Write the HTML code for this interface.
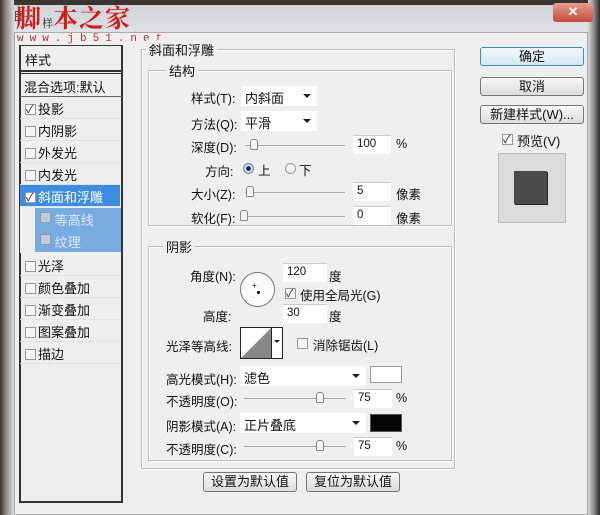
<!DOCTYPE html>
<html><head><meta charset="utf-8"><style>
*{margin:0;padding:0;box-sizing:border-box}
body{width:600px;height:515px;overflow:hidden;background:#ececec;font-family:"Liberation Sans","Noto Sans CJK SC",sans-serif;font-size:12.5px;color:#111;position:relative}
.a{position:absolute;white-space:nowrap}
.box{position:absolute;border:1px solid #bcbcbc;box-shadow:inset 1px 1px 0 #fff,1px 1px 0 #fff}
.lbl{position:absolute;background:#efefef;padding:0 3px;font-size:13px}
.in{position:absolute;background:#fff;border-top:1px solid #ccc;height:19px;padding:2px 0 0 4px;font-size:11.5px}
.dd{position:absolute;background:#fff;height:20px;padding:2px 0 0 4px;font-size:13px}
.dd:after{content:"";position:absolute;right:6px;top:8px;border:4px solid transparent;border-top:4px solid #222}
.sl{position:absolute;height:1px;background:#aaa}
.th{position:absolute;width:8px;height:11px;border:1px solid #888;border-radius:3px 3px 1px 1px;background:#f4f4f4}
.cb{position:absolute;width:11px;height:11px;border:1px solid #999;background:#f6f6f6}
.ck:after{content:"✓";position:absolute;left:0;top:-4px;font-size:11px;color:#233}
.btn{position:absolute;border:1px solid #777;border-radius:3px;background:linear-gradient(#f8f8f8,#dcdcdc);text-align:center;font-size:13px;line-height:17px}
.row{position:absolute;left:20px;width:100px;height:22px;border-bottom:1px solid #e2e2e2;font-size:13px;padding:2px 0 0 5px}
.row .cb{position:relative;display:inline-block;vertical-align:-1px;margin-right:2px}
</style></head><body>
<div class="a" style="left:0;top:0;width:600px;height:5px;background:#3a3530"></div>
<div class="a" style="left:0;top:5px;width:600px;height:27px;background:linear-gradient(#cfd3d8,#dfe2e6)"></div>
<div class="a" style="left:0;top:0;width:14px;height:515px;background:linear-gradient(90deg,#3a3026,#8a8680 40%,#d8dadc)"></div>
<div class="a" style="left:588px;top:0;width:12px;height:515px;background:linear-gradient(90deg,#d8dadc,#888 50%,#2a2a2a)"></div>
<div class="a" style="left:14px;top:32px;width:574px;height:483px;background:#efefef;border:1px solid #aaa"></div>
<div class="a" style="left:553px;top:3px;width:40px;height:19px;border-radius:3px;background:linear-gradient(#e6a090,#c44a38);color:#fff;text-align:center;font-weight:bold;font-size:13px;line-height:18px">✕</div>
<div class="a" style="left:14px;top:8px;font-size:11px;color:#222">图</div>
<div class="a" style="left:16px;top:2px;font-size:25px;font-weight:bold;color:#d21c1c;font-family:'Noto Serif CJK SC',serif;letter-spacing:1px;line-height:30px">脚<span style="font-size:11px;color:#222;font-weight:normal;letter-spacing:0">样</span>本之家</div>
<div class="a" style="left:17px;top:33px;font-size:11px;color:#b33;letter-spacing:6px;font-family:'Liberation Mono',monospace">www.jb51.net</div>

<div class="a" style="left:19px;top:45px;width:104px;height:458px;border:2px solid #333;border-top-width:1px;background:#efefef"></div>
<div class="a" style="left:25px;top:50px;font-size:13px">样式</div>
<div class="a" style="left:20px;top:70px;width:102px;height:4px;border-top:2px solid #333;border-bottom:1px solid #333"></div>
<div class="a" style="left:24px;top:77px;font-size:13px">混合选项:默认</div>
<div class="a" style="left:20px;top:96px;width:102px;height:1px;background:#666"></div>
<div class="row" style="top:97px"><span class="cb ck"></span>投影</div>
<div class="row" style="top:119px"><span class="cb"></span>内阴影</div>
<div class="row" style="top:141px"><span class="cb"></span>外发光</div>
<div class="row" style="top:163px"><span class="cb"></span>内发光</div>
<div class="row" style="top:185px;background:#3d8ee0;color:#fff"><span class="cb ck"></span>斜面和浮雕</div>
<div class="a" style="left:20px;top:207px;width:15px;height:46px;background:#efefef"></div>
<div class="a" style="left:35px;top:208px;width:86px;height:44px;background:#78abdf"></div>
<div class="a" style="left:40px;top:210px;color:#dce9f6;font-size:13px"><span class="cb" style="position:relative;display:inline-block;background:#bcd">&nbsp;</span> 等高线</div>
<div class="a" style="left:40px;top:232px;color:#dce9f6;font-size:13px"><span class="cb" style="position:relative;display:inline-block;background:#bcd">&nbsp;</span> 纹理</div>
<div class="row" style="top:254px"><span class="cb"></span>光泽</div>
<div class="row" style="top:276px"><span class="cb"></span>颜色叠加</div>
<div class="row" style="top:298px"><span class="cb"></span>渐变叠加</div>
<div class="row" style="top:320px"><span class="cb"></span>图案叠加</div>
<div class="row" style="top:342px"><span class="cb"></span>描边</div>

<div class="box" style="left:141px;top:49px;width:314px;height:420px"></div>
<div class="lbl" style="left:146px;top:40px">斜面和浮雕</div>
<div class="box" style="left:148px;top:70px;width:304px;height:156px"></div>
<div class="lbl" style="left:166px;top:61px">结构</div>
<div class="a" style="left:191px;top:88px">样式(T):</div><div class="dd" style="left:241px;top:86px;width:76px">内斜面</div>
<div class="a" style="left:191px;top:114px">方法(Q):</div><div class="dd" style="left:241px;top:111px;width:76px">平滑</div>
<div class="a" style="left:191px;top:137px">深度(D):</div><div class="sl" style="left:245px;top:145px;width:100px"></div><div class="th" style="left:250px;top:139px"></div><div class="in" style="left:353px;top:135px;width:38px">100</div><div class="a" style="left:396px;top:137px">%</div>
<div class="a" style="left:205px;top:161px">方向:</div>
<div class="a" style="left:243px;top:163px;width:11px;height:11px;border-radius:50%;border:1px solid #789;background:radial-gradient(#124 30%,#bde 40%)"></div><div class="a" style="left:258px;top:160px">上</div>
<div class="a" style="left:285px;top:163px;width:11px;height:11px;border-radius:50%;border:1px solid #999;background:#f4f4f4"></div><div class="a" style="left:299px;top:160px">下</div>
<div class="a" style="left:191px;top:184px">大小(Z):</div><div class="sl" style="left:245px;top:192px;width:100px"></div><div class="th" style="left:246px;top:186px"></div><div class="in" style="left:353px;top:182px;width:38px">5</div><div class="a" style="left:396px;top:184px">像素</div>
<div class="a" style="left:191px;top:208px">软化(F):</div><div class="sl" style="left:245px;top:216px;width:100px"></div><div class="th" style="left:240px;top:210px"></div><div class="in" style="left:353px;top:206px;width:38px">0</div><div class="a" style="left:396px;top:208px">像素</div>

<div class="box" style="left:148px;top:246px;width:304px;height:215px"></div>
<div class="lbl" style="left:163px;top:237px">阴影</div>
<div class="a" style="left:190px;top:266px">角度(N):</div>
<div class="a" style="left:240px;top:272px;width:35px;height:35px;border-radius:50%;border:1px solid #777;background:#fafafa"></div>
<div class="a" style="left:257px;top:291px;width:3px;height:3px;background:#000;border-radius:50%"></div>
<div class="a" style="left:252px;top:281px;font-size:8px">+</div>
<div class="in" style="left:283px;top:263px;width:44px">120</div><div class="a" style="left:329px;top:266px">度</div>
<div class="cb ck" style="left:285px;top:288px"></div><div class="a" style="left:300px;top:285px">使用全局光(G)</div>
<div class="a" style="left:203px;top:306px">高度:</div><div class="in" style="left:283px;top:304px;width:44px">30</div><div class="a" style="left:329px;top:306px">度</div>
<div class="a" style="left:166px;top:336px">光泽等高线:</div>
<div class="a" style="left:240px;top:327px;width:43px;height:32px;border:1px solid #222;background:#fff;overflow:hidden"><svg width="30" height="30" style="position:absolute;left:0;top:0"><polygon points="0,30 30,0 30,30" fill="#888"/></svg><div style="position:absolute;left:30px;top:0;width:1px;height:32px;background:#222"></div><div style="position:absolute;left:33px;top:12px;border:3px solid transparent;border-top:3px solid #222"></div></div>
<div class="cb" style="left:297px;top:338px"></div><div class="a" style="left:313px;top:335px">消除锯齿(L)</div>
<div class="a" style="left:166px;top:369px">高光模式(H):</div><div class="dd" style="left:240px;top:366px;width:126px">滤色</div>
<div class="a" style="left:370px;top:366px;width:32px;height:17px;border:1px solid #999;background:#fff"></div>
<div class="a" style="left:166px;top:391px">不透明度(O):</div><div class="sl" style="left:244px;top:398px;width:102px"></div><div class="th" style="left:316px;top:392px"></div><div class="in" style="left:354px;top:389px;width:38px">75</div><div class="a" style="left:396px;top:391px">%</div>
<div class="a" style="left:166px;top:416px">阴影模式(A):</div><div class="dd" style="left:240px;top:413px;width:126px">正片叠底</div>
<div class="a" style="left:370px;top:414px;width:32px;height:18px;border:1px solid #555;background:#050505"></div>
<div class="a" style="left:166px;top:439px">不透明度(C):</div><div class="sl" style="left:244px;top:446px;width:102px"></div><div class="th" style="left:316px;top:440px"></div><div class="in" style="left:354px;top:437px;width:38px">75</div><div class="a" style="left:396px;top:439px">%</div>
<div class="btn" style="left:203px;top:472px;width:94px;height:20px">设置为默认值</div>
<div class="btn" style="left:306px;top:472px;width:94px;height:20px">复位为默认值</div>

<div class="btn" style="left:480px;top:47px;width:104px;height:19px;border-color:#3a8fc0;background:linear-gradient(#f2f8fc,#d6e8f4)">确定</div>
<div class="btn" style="left:480px;top:77px;width:104px;height:19px">取消</div>
<div class="btn" style="left:480px;top:105px;width:104px;height:19px">新建样式(W)...</div>
<div class="cb ck" style="left:502px;top:134px"></div><div class="a" style="left:517px;top:131px;font-size:13px">预览(V)</div>
<div class="a" style="left:498px;top:153px;width:68px;height:70px;border:1px solid #bbb;background:#dcdcdc"></div>
<div class="a" style="left:514px;top:171px;width:33px;height:33px;background:#4b4b4b;box-shadow:1px 1px 0 #222"></div>
</body></html>
